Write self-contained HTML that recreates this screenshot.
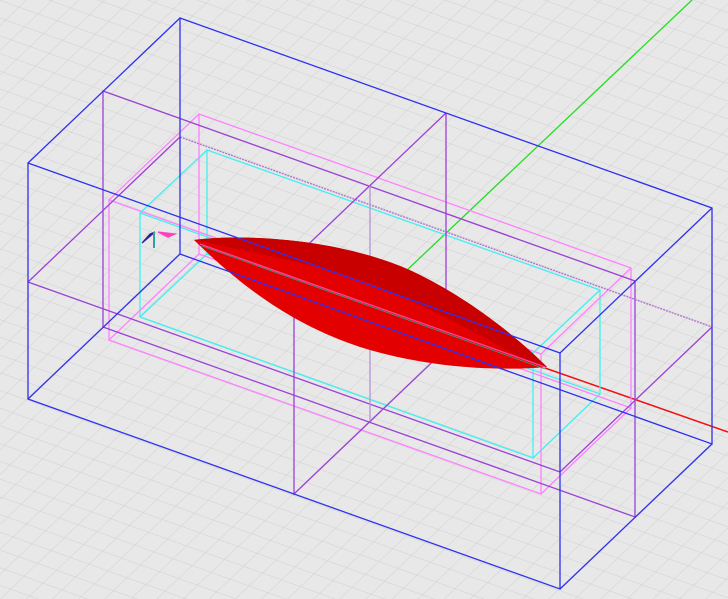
<!DOCTYPE html>
<html><head><style>html,body{margin:0;padding:0;background:#e8e8e8;overflow:hidden}svg{display:block}</style></head>
<body>
<svg width="728" height="599" viewBox="0 0 728 599" xmlns="http://www.w3.org/2000/svg">
<defs>
<pattern id="g" width="1" height="1" patternUnits="userSpaceOnUse" patternTransform="matrix(19 6.8 -13.5 12.9 0 0)">
<rect width="1" height="1" fill="#e8e8e8"/>
<path d="M0 0H1M0 0V1" stroke="#d2d2d2" stroke-width="0.06" fill="none"/>
</pattern>
</defs>
<rect width="728" height="599" fill="url(#g)"/>
<g fill="none" stroke-width="1.3">
<line x1="692" y1="0" x2="405" y2="272" stroke="#20e020"/>
<line x1="545" y1="368" x2="728" y2="432" stroke="#f01010" stroke-width="1.5"/>
<g stroke="#40f0f0">
<path d="M207 150L600 290L600 394L207 254Z"/>
<path d="M140 213L533 353L533 458L140 317Z"/>
<path d="M207 150L140 213M600 290L533 353M600 394L533 458M207 254L140 317"/>
</g>
<g stroke="#ff80ff">
<path d="M199 114L631 268L631 408L199 254Z"/>
<path d="M109 200L541 354L541 494L109 340Z"/>
<path d="M199 114L109 200M631 268L541 354M631 408L541 494M199 254L109 340"/>
</g>
<g stroke="#9a40d8">
<path d="M103 91L635 281L635 517L103 327Z"/>
<path d="M28 282L560 472L712 327"/>
<path d="M180 137L712 327" stroke-dasharray="2 1" stroke="#b070d0"/>
<path d="M28 282L180 137"/>
<path d="M446 113L294 258L294 494L446 349L446 113"/>
<path d="M370 186L370 421" stroke="#b890d8"/>
</g>
<path d="M194 240C250 233 350 240 420 275C470 300 515 335 547 367C490 372 420 366 360 347C300 327 250 295 194 240Z" fill="#e20000" stroke="none"/>
<path d="M194 240C250 233 350 240 420 275C470 300 515 335 547 367L520 357C470 330 400 290 330 270C270 255 230 248 194 240Z" fill="#c80000" stroke="none"/>
<path d="M200 244L545 367" stroke="#ff40a0"/>
<path d="M202 246L545 369" stroke="#30a080" stroke-width="0.8"/>
<g stroke="#3030f0">
<path d="M180 18L712 208L712 444L180 254Z"/>
<path d="M28 163L560 353L560 589L28 399Z"/>
<path d="M180 18L28 163M712 208L560 353M712 444L560 589M180 254L28 399"/>
</g>
<path d="M158 232L175 234L168 237Z" fill="#ff40c0" stroke="#ff40c0"/>
<path d="M155 232L142 243L150 234Z" fill="#3020a0" stroke="#3020a0"/>
<path d="M154 232L154 248" stroke="#30a0a0" stroke-width="2"/>
</g>
</svg>
</body></html>
